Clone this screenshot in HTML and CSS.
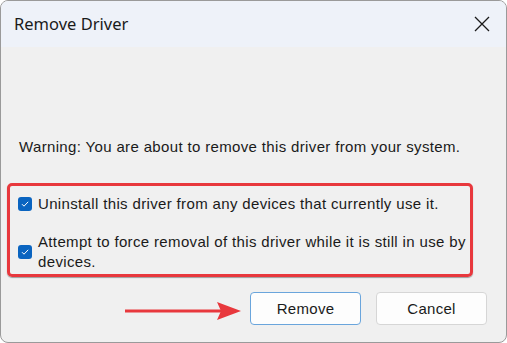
FILE: index.html
```html
<!DOCTYPE html>
<html>
<head>
<meta charset="utf-8">
<link rel="stylesheet" href="styles.css">
</head>
<body>
<div class="window">
  <div class="titlebar">
    <span class="title">Remove Driver</span>
    <svg class="close" width="16" height="16" viewBox="0 0 16 16"><path d="M1 1 L15 15 M15 1 L1 15" stroke="#1a1a1a" stroke-width="1.3" fill="none"/></svg>
  </div>
  <div class="content">
    <p class="warning">Warning: You are about to remove this driver from your system.</p>
    <div class="highlight">
      <label class="option">
        <span class="check"><svg width="14" height="14" viewBox="0 0 14 14"><path d="M4 7.2 L6 9.2 L10.2 4.8" stroke="#fff" stroke-width="1" fill="none"/></svg></span>
        <span class="opt-text">Uninstall this driver from any devices that currently use it.</span>
      </label>
      <label class="option">
        <span class="check"><svg width="14" height="14" viewBox="0 0 14 14"><path d="M4 7.2 L6 9.2 L10.2 4.8" stroke="#fff" stroke-width="1" fill="none"/></svg></span>
        <span class="opt-text">Attempt to force removal of this driver while it is still in use by devices.</span>
      </label>
    </div>
    <div class="footer">
      <svg class="arrow" width="116" height="20" viewBox="0 0 116 20"><line x1="0" y1="10" x2="96" y2="10" stroke="#e8383d" stroke-width="3"/><polygon points="92,1 116,10 92,19 96,10" fill="#e8383d"/></svg>
      <button class="btn primary">Remove</button>
      <button class="btn">Cancel</button>
    </div>
  </div>
</div>
</body>
</html>
```

FILE: styles.css
```css
html, body {
  margin: 0;
  padding: 0;
  background: #ffffff;
}
.window {
  width: 507px;
  height: 343px;
  box-sizing: border-box;
  border: 1px solid #9a9a9a;
  border-radius: 8px;
  overflow: hidden;
  display: flex;
  flex-direction: column;
  background: #f0f0f0;
  font-family: "Liberation Sans", Arial, sans-serif;
  color: #1a1a1a;
}
.titlebar {
  height: 46px;
  flex: none;
  background: #eef2f9;
  display: flex;
  align-items: center;
  justify-content: space-between;
  padding: 0 16px 0 13px;
}
.title {
  font-family: "Noto Sans", sans-serif;
  font-size: 16.5px;
  color: #1a1a1a;
  margin-top: -1px;
}
.close {
  margin-top: 0;
}
.content {
  flex: 1;
  display: flex;
  flex-direction: column;
  padding: 91px 0 0 6px;
}
.warning {
  margin: 0 0 27px 12px;
  font-size: 15px;
  letter-spacing: 0.35px;
  line-height: 18px;
}
.highlight {
  width: 466px;
  box-sizing: border-box;
  border: 3px solid #e8383d;
  border-radius: 5px;
  box-shadow: 0 1px 1px rgba(0,0,0,0.35);
  padding: 8px 4px 2px 8px;
  display: flex;
  flex-direction: column;
  gap: 18px;
}
.option {
  display: flex;
  align-items: center;
  gap: 6px;
  font-size: 15px;
  letter-spacing: 0.35px;
  line-height: 20px;
}
.check {
  width: 14px;
  height: 14px;
  flex: none;
  background: #0a64c0;
  border-radius: 3px;
  display: flex;
}
.footer {
  display: flex;
  align-items: center;
  justify-content: flex-end;
  gap: 15px;
  margin-top: 15px;
  padding-right: 19px;
}
.arrow {
  margin-right: -6px;
  margin-top: 4px;
}
.btn {
  width: 111px;
  height: 33px;
  background: #fdfdfd;
  border: 1px solid #d6d6d6;
  border-radius: 4px;
  font-family: "Liberation Sans", Arial, sans-serif;
  font-size: 15px;
  letter-spacing: 0.3px;
  color: #1a1a1a;
  padding: 0;
}
.btn.primary {
  border-color: #6aa5dc;
}
```
